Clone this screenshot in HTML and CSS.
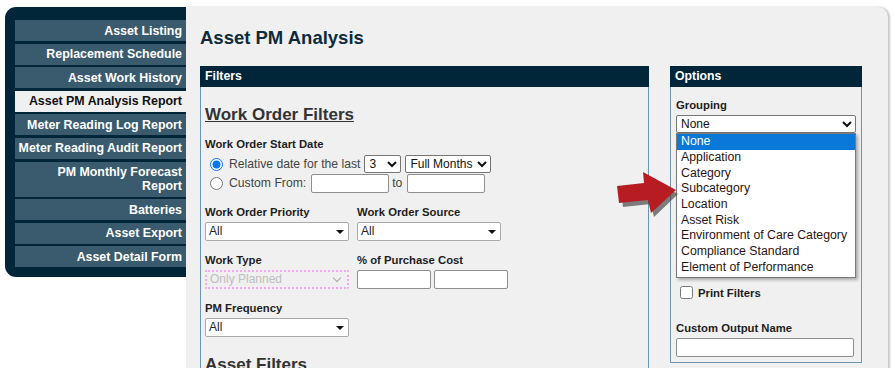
FILE: index.html
```html
<!DOCTYPE html>
<html lang="en">
<head>
  <meta charset="UTF-8">
  <meta name="viewport" content="width=device-width, initial-scale=1.0">
  <title>Asset PM Analysis</title>
  <link rel="stylesheet" href="styles.css">
</head>
<body>
  <div class="page">
    <!-- Report menu -->
    <nav class="sidebar">
      <a class="nav-item" href="#">Asset Listing</a>
      <a class="nav-item" href="#">Replacement Schedule</a>
      <a class="nav-item" href="#">Asset Work History</a>
      <a class="nav-item active" href="#">Asset PM Analysis Report</a>
      <a class="nav-item" href="#">Meter Reading Log Report</a>
      <a class="nav-item" href="#">Meter Reading Audit Report</a>
      <a class="nav-item" href="#">PM Monthly Forecast Report</a>
      <a class="nav-item" href="#">Batteries</a>
      <a class="nav-item" href="#">Asset Export</a>
      <a class="nav-item" href="#">Asset Detail Form</a>
    </nav>

    <main class="content">
      <h1 class="page-title">Asset PM Analysis</h1>

      <div class="panels">
        <!-- Filters -->
        <section class="panel panel-filters">
          <div class="panel-head">Filters</div>
          <div class="panel-body">
            <h2 class="section-title">Work Order Filters</h2>

            <div class="field">
              <div class="field-label tight">Work Order Start Date</div>
              <div class="radio-row">
                <input type="radio" name="range" checked>
                <span>Relative date for the last</span>
                <select class="native sel-num"><option>3</option></select>
                <select class="native sel-unit"><option>Full Months</option></select>
              </div>
              <div class="radio-row">
                <input type="radio" name="range">
                <span>Custom From:</span>
                <input type="text" class="text-input date">
                <span>to</span>
                <input type="text" class="text-input date">
              </div>
            </div>

            <div class="field-grid">
              <div class="field">
                <div class="field-label">Work Order Priority</div>
                <span class="combo"><select><option>All</option></select></span>
              </div>
              <div class="field">
                <div class="field-label">Work Order Source</div>
                <span class="combo"><select><option>All</option></select></span>
              </div>
              <div class="field">
                <div class="field-label">Work Type</div>
                <span class="combo locked"><select disabled><option>Only Planned</option></select></span>
              </div>
              <div class="field">
                <div class="field-label">% of Purchase Cost</div>
                <div class="pair">
                  <input type="text" class="text-input">
                  <input type="text" class="text-input">
                </div>
              </div>
              <div class="field">
                <div class="field-label">PM Frequency</div>
                <span class="combo"><select><option>All</option></select></span>
              </div>
            </div>

            <h2 class="section-title">Asset Filters</h2>
          </div>
        </section>

        <!-- Options -->
        <section class="panel panel-options">
          <div class="panel-head">Options</div>
          <div class="panel-body">
            <div class="field-label tight">Grouping</div>
            <div class="select-wrap">
              <select class="native sel-group"><option>None</option></select>
              <ul class="dropdown">
                <li class="selected">None</li>
                <li>Application</li>
                <li>Category</li>
                <li>Subcategory</li>
                <li>Location</li>
                <li>Asset Risk</li>
                <li>Environment of Care Category</li>
                <li>Compliance Standard</li>
                <li>Element of Performance</li>
              </ul>
            </div>

            <label class="check-row">
              <input type="checkbox">
              <span>Print Filters</span>
            </label>

            <div class="field">
              <div class="field-label">Custom Output Name</div>
              <input type="text" class="text-input wide">
            </div>
          </div>
        </section>
      </div>
    </main>

    <!-- Callout arrow -->
    <svg class="arrow" width="80" height="60" viewBox="0 0 80 60">
      <polygon class="arrow-shadow" points="16,25 42,22 41,11 73,29 49,52 46,39 18,42"/>
      <polygon class="arrow-body" points="12,21 39,18 38,7 71,25 46,48 43,35 14,38"/>
    </svg>
  </div>
</body>
</html>
```

FILE: styles.css
```css
html, body {
  margin: 0;
  height: 368px;
  overflow: hidden;
}

body {
  font-family: "Liberation Sans", Arial, sans-serif;
  background: #fff;
  color: #222;
}

.page {
  position: relative;
  display: flex;
  align-items: flex-start;
  padding: 7px 0 0 5px;
}

/* Menu lateral */
.sidebar {
  width: 171px;
  flex: none;
  background: #022639;
  border-radius: 11px 0 0 11px;
  padding: 13px 0 9.6px 10px;
}

.nav-item {
  display: block;
  background: #3a5b6e;
  color: #fff;
  font-weight: bold;
  font-size: 12.4px;
  line-height: 14px;
  text-align: right;
  text-decoration: none;
  padding: 3.5px 4px 3.5px 1px;
  margin-bottom: 2.6px;
}

.nav-item:last-child {
  margin-bottom: 0;
}

.nav-item.active {
  background: #f0f0f0;
  color: #111;
}

/* Area principal */
.content {
  flex: 1;
  min-height: 420px;
  margin-right: 7px;
  padding: 20px 0 0 14px;
  background: #f0f0f0;
  border-radius: 0 10px 0 0;
  box-shadow: 2px 0 2px rgba(0, 0, 0, 0.22);
}

.page-title {
  margin: 0 0 17px;
  font-size: 18.5px;
  line-height: 22px;
  color: #0e2a3b;
}

.panels {
  display: flex;
  align-items: flex-start;
  gap: 21px;
}

.panel {
  border: 1px solid #6f95ae;
  border-top: none;
}

.panel-filters {
  width: 447px;
  min-height: 320px;
}

.panel-options {
  width: 190px;
}

.panel-head {
  background: #022639;
  color: #fff;
  font-weight: bold;
  font-size: 12.3px;
  line-height: 21px;
  padding-left: 5px;
  margin: 0 -1px;
}

.panel-filters .panel-body {
  padding: 17.5px 4px 0;
}

.panel-options .panel-body {
  padding: 10.6px 5px 5px;
}

.section-title {
  margin: 18px 0 0;
  font-size: 17px;
  line-height: 20px;
  color: #333;
  text-decoration: underline;
}

.section-title:first-child {
  margin-top: 0;
}

/* Campos */
.field {
  margin-top: 12.5px;
}

.field-label {
  font-weight: bold;
  font-size: 11.3px;
  line-height: 14px;
  color: #1e1e1e;
  margin-bottom: 2.5px;
}

.field-label.tight {
  margin-bottom: 3.5px;
}

.field-grid {
  display: grid;
  grid-template-columns: 144px 144px;
  column-gap: 8px;
}

.radio-row {
  display: flex;
  align-items: center;
  gap: 3px;
  height: 19px;
  font-size: 12.2px;
  color: #444;
}

.radio-row input[type="radio"] {
  margin: 0 3px 0 5px;
  width: 13px;
  height: 13px;
}

select.native {
  box-sizing: border-box;
  font-family: "Liberation Sans", Arial, sans-serif;
  font-size: 12px;
  color: #111;
  height: 18px;
  padding: 0;
  border: 1px solid #767676;
  border-radius: 2px;
  background: #fff;
}

.sel-num {
  width: 37px;
  margin-left: 1px;
}

.sel-unit {
  width: 86px;
  margin-left: 1px;
}

.text-input {
  box-sizing: border-box;
  height: 19px;
  border: 1px solid #8f8f8f;
  border-radius: 2px;
  background: #fff;
  padding: 0 3px;
  font-size: 12px;
}

.text-input.date {
  width: 78px;
  margin-left: 2px;
}

.text-input.wide {
  width: 178px;
}

.pair {
  display: flex;
  gap: 3.5px;
}

.pair .text-input {
  width: 73.5px;
  flex: none;
}

/* Selects com seta triangular */
.combo {
  position: relative;
  display: block;
  width: 144px;
}

.combo select {
  appearance: none;
  box-sizing: border-box;
  display: block;
  width: 100%;
  height: 19px;
  border: 1px solid #aaa;
  border-radius: 2px;
  background: #fff;
  padding: 0 3px;
  font-family: "Liberation Sans", Arial, sans-serif;
  font-size: 12px;
  color: #222;
}

.combo::after {
  content: "";
  position: absolute;
  right: 5px;
  top: 8px;
  border-left: 4px solid transparent;
  border-right: 4px solid transparent;
  border-top: 4px solid #111;
}

.combo.locked select {
  border: 2px dotted #f28cf0;
  background: transparent;
  color: #aaa;
}

.combo.locked::after {
  right: 9px;
  top: 5px;
  width: 5px;
  height: 5px;
  border: none;
  border-right: 1.5px solid #aaa;
  border-bottom: 1.5px solid #aaa;
  transform: rotate(45deg);
}

/* Opcoes */
.select-wrap {
  position: relative;
}

.sel-group {
  display: block;
  width: 180px;
}

.dropdown {
  position: absolute;
  top: 18px;
  left: 0;
  z-index: 2;
  box-sizing: border-box;
  width: 180px;
  margin: 0;
  padding: 0 0 2px;
  list-style: none;
  background: #fff;
  border: 1px solid #7a7a7a;
  box-shadow: 2px 2px 3px rgba(0, 0, 0, 0.3);
  font-size: 12.3px;
  line-height: 15.7px;
  color: #2b1414;
}

.dropdown li {
  padding-left: 4px;
}

.dropdown li.selected {
  background: #0a78d8;
  color: #fff;
}

.check-row {
  display: flex;
  align-items: center;
  gap: 5px;
  margin-top: 153px;
  font-weight: bold;
  font-size: 11.3px;
  color: #1e1e1e;
}

.check-row input {
  margin: 0 0 0 4px;
  width: 13px;
  height: 13px;
}

.panel-options .field {
  margin-top: 22px;
}

/* Seta vermelha */
.arrow {
  position: absolute;
  left: 605px;
  top: 165px;
  z-index: 3;
}

.arrow-shadow {
  fill: rgba(60, 60, 60, 0.65);
}

.arrow-body {
  fill: #b71c22;
}
```
